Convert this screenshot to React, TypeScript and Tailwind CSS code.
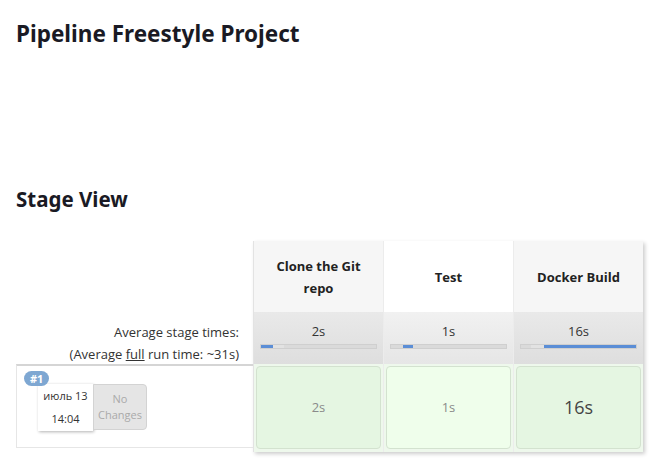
const STAGES = [
  { name: 'Clone the Git repo', avg: '2s', head: 'bg-[#f6f6f6]', avgBg: 'bg-gradient-to-b from-[#e9e9e9] to-[#dedede]', cell: 'bg-[#e5f6e2]', time: '2s', big: false },
  { name: 'Test', avg: '1s', head: 'bg-white', avgBg: 'bg-gradient-to-b from-[#f1f1f1] to-[#e6e6e6]', cell: 'bg-[#effeeb]', time: '1s', big: false },
  { name: 'Docker Build', avg: '16s', head: 'bg-[#f6f6f6]', avgBg: 'bg-gradient-to-b from-[#e9e9e9] to-[#dedede]', cell: 'bg-[#e5f6e2]', time: '16s', big: true },
]

function Bar({ idx }: { idx: number }) {
  // track with a small lighter segment and the blue fill
  if (idx === 0) {
    return (
      <div className="mx-[6px] flex h-[5px] border border-[#cfcfcf] bg-[#dadada]">
        <div className="w-[12px] bg-[#5b8ed6]" />
        <div className="w-[11px] bg-[#e2e2e2]" />
      </div>
    )
  }
  if (idx === 1) {
    return (
      <div className="mx-[6px] flex h-[5px] border border-[#cfcfcf] bg-[#dadada]">
        <div className="ml-[12px] w-[10px] bg-[#5b8ed6]" />
      </div>
    )
  }
  return (
    <div className="mx-[6px] flex h-[5px] border border-[#cfcfcf] bg-[#dadada]">
      <div className="w-[10px]" />
      <div className="w-[13px] bg-[#e2e2e2]" />
      <div className="flex-1 bg-[#5b8ed6]" />
    </div>
  )
}

export default function App() {
  return (
    <div className="min-h-[468px] bg-white text-[#333] px-4" style={{ fontFamily: '"Open Sans", "Noto Sans", sans-serif' }}>
      <h1 className="pt-[18px] text-[22.5px] font-bold text-[#1a1a24] leading-[32px]" style={{ fontFamily: '"Noto Sans", sans-serif' }}>
        Pipeline Freestyle Project
      </h1>

      <h2 className="mt-[134px] text-[20.5px] font-bold text-[#1a1a24] leading-[30px]" style={{ fontFamily: '"Noto Sans", sans-serif' }}>
        Stage View
      </h2>

      <div className="mt-[27px] flex">
        {/* left column */}
        <div className="w-[237px] flex flex-col">
          <div className="h-[71px]" />
          <div className="h-[52px] pr-[14px] pt-[9px] text-right text-[13px] leading-[22px] text-[#333]">
            <div>Average stage times:</div>
            <div>
              (Average <span className="underline">full</span> run time: ~31s)
            </div>
          </div>
          <div className="relative h-[84px] border border-r-0 border-[#e6e6e6] border-t-[#d5d5d5] border-t-2">
            <div className="absolute left-[7px] top-[5px] z-10 rounded-full bg-[#7ea7d2] px-[6px] text-[11px] font-bold leading-[15px] text-white">
              #1
            </div>
            <div className="ml-[21px] mt-[18px] flex">
              <div className="w-[55px] h-[47px] bg-white shadow-[1px_1px_3px_rgba(0,0,0,0.3)] flex flex-col items-center justify-center gap-[9px] text-[11px] leading-[14px] text-[#333]">
                <div>июль 13</div>
                <div>14:04</div>
              </div>
              <div className="w-[54px] h-[46px] rounded-r-[4px] border border-[#d3d3d3] bg-[#e5e5e5] flex flex-col items-center justify-center text-[11px] leading-[16px] text-[#aaa]">
                <div>No</div>
                <div>Changes</div>
              </div>
            </div>
          </div>
        </div>

        {/* stages */}
        <div className="flex gap-px border-l border-[#e3e3e3] bg-[#ececec] shadow-[2px_2px_4px_rgba(0,0,0,0.2)]">
          {STAGES.map((s, i) => (
            <div key={s.name} className="w-[129px] flex flex-col">
              <div className={`h-[71px] ${s.head} flex items-center justify-center px-5 text-center text-[13px] font-bold leading-[22px] text-[#222]`}>
                {s.name}
              </div>
              <div className={`h-[52px] ${s.avgBg} pt-[10px]`}>
                <div className="text-center text-[13px] leading-[18px] text-[#333]">{s.avg}</div>
                <div className="mt-[4px]">
                  <Bar idx={i} />
                </div>
              </div>
              <div className="h-[88px] bg-[#eef8ec] p-[2px]">
                <div className={`h-[83px] rounded-[4px] border border-[#d3e2cf] ${s.cell} flex items-center justify-center ${s.big ? 'text-[18px] text-[#444]' : 'text-[13px] text-[#8a8a8a]'}`}>
                  {s.time}
                </div>
              </div>
            </div>
          ))}
        </div>
      </div>
    </div>
  )
}
